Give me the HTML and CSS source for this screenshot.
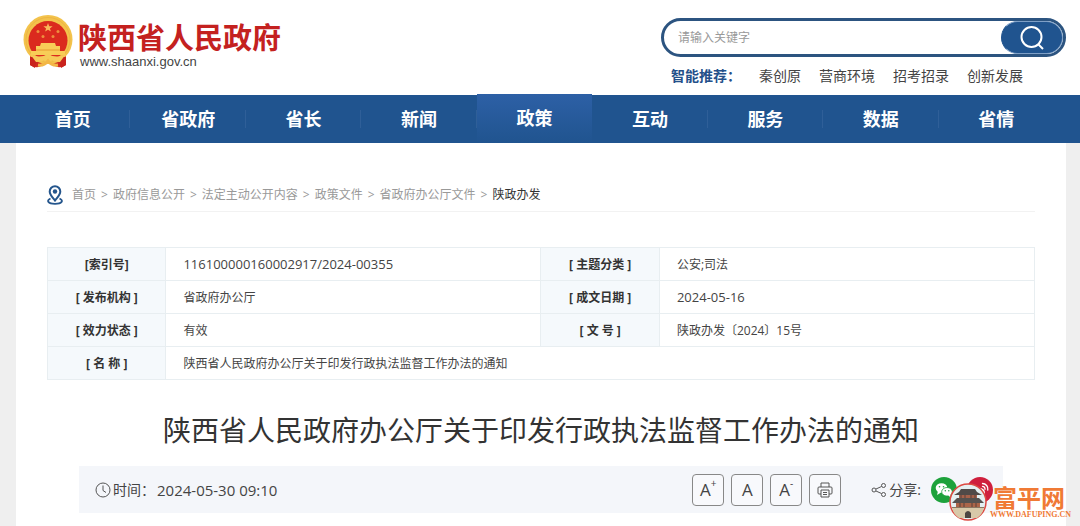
FILE: index.html
```html
<!DOCTYPE html>
<html lang="zh-CN">
<head>
  <meta charset="UTF-8">
  <meta name="viewport" content="width=device-width, initial-scale=1">
  <title>陕西省人民政府办公厅关于印发行政执法监督工作办法的通知</title>
  <link rel="stylesheet" href="styles.css">
</head>
<body>
  <header class="header">
    <a class="logo" href="#">
      <svg class="emblem" viewBox="0 0 50 54" aria-hidden="true">
        <path d="M7 36 L7 50 Q13 54 18 51 L25 47 L32 51 Q37 54 43 50 L43 36 Z" fill="#cf2a20"/>
        <circle cx="25" cy="24.500" r="24.500" fill="#f3c34c"/>
        <circle cx="25" cy="24.500" r="22" fill="none" stroke="#edb443" stroke-width="1"/>
        <circle cx="25" cy="25.500" r="19.500" fill="#db2a1e"/>
        <path d="M25 8 l1.200 3.200 3.400 .1 -2.700 2.100 1 3.200 -2.900 -1.900 -2.900 1.900 1 -3.200 -2.700 -2.100 3.400 -.1 z" fill="#f9b95a"/>
        <g fill="#ee8f3e">
          <circle cx="15" cy="16.500" r="1.500"/><circle cx="35" cy="16.500" r="1.500"/>
          <circle cx="20" cy="21.500" r="1.500"/><circle cx="30" cy="21.500" r="1.500"/>
        </g>
        <path d="M18 28 h14 l1 3 h4 v5 h5 v4 H8 v-4 h5 v-5 h4 z" fill="#f8cd57"/>
        <path d="M13 35 h24" stroke="#e89a33" stroke-width="1"/>
        <path d="M7 42 L14 42 L12 53 L7 50 Z M43 42 L36 42 L38 53 L43 50 Z" fill="#c9231d"/>
        <path d="M7 39 Q16 44 25 39 Q34 44 43 39 L37 47 Q30 47 25 43 Q20 47 13 47 Z" fill="#f7c95a"/>
        <circle cx="25" cy="44" r="4" fill="#f5cb58"/>
        <path d="M15 50 Q21 51 25 46 Q29 51 35 50" fill="none" stroke="#f3b746" stroke-width="3"/>
      </svg>
      <span class="logo-text">
        <strong class="logo-name">陕西省人民政府</strong>
        <span class="logo-url">www.shaanxi.gov.cn</span>
      </span>
    </a>
    <div class="tools">
      <form class="search">
        <input type="text" placeholder="请输入关键字" aria-label="请输入关键字">
        <button type="button" aria-label="搜索">
          <svg viewBox="0 0 24 24" width="24" height="24"><circle cx="11.500" cy="11" r="10"/><path d="M18.500 18.500 L23 23"/></svg>
        </button>
      </form>
      <div class="hot">
        <strong>智能推荐：</strong>
        <a href="#">秦创原</a>
        <a href="#">营商环境</a>
        <a href="#">招考招录</a>
        <a href="#">创新发展</a>
      </div>
    </div>
  </header>

  <nav class="nav">
    <a href="#">首页</a>
    <a href="#">省政府</a>
    <a href="#">省长</a>
    <a href="#">新闻</a>
    <a class="active" href="#">政策</a>
    <a href="#">互动</a>
    <a href="#">服务</a>
    <a href="#">数据</a>
    <a href="#">省情</a>
  </nav>

  <main class="main">
    <div class="crumbs">
      <svg class="pin" viewBox="0 0 16 20" width="16" height="20" aria-hidden="true">
        <path d="M8 15.500 C5 11.800 2.700 9.800 2.700 6.500 A5.300 5.300 0 0 1 13.300 6.500 C13.300 9.800 11 11.800 8 15.500 Z" fill="none" stroke="#24558c" stroke-width="2"/>
        <circle cx="8" cy="6.500" r="2.200" fill="#24558c"/>
        <path d="M3.500 13.500 C-1 15.500 1 18.800 8 18.800 C15 18.800 17 15.500 12.500 13.500" fill="none" stroke="#24558c" stroke-width="1.800"/>
      </svg>
      <a href="#">首页</a><span>&gt;</span>
      <a href="#">政府信息公开</a><span>&gt;</span>
      <a href="#">法定主动公开内容</a><span>&gt;</span>
      <a href="#">政策文件</a><span>&gt;</span>
      <a href="#">省政府办公厅文件</a><span>&gt;</span>
      <a class="current" href="#">陕政办发</a>
    </div>

    <table class="info">
      <tr>
        <th>[索引号]</th>
        <td class="num">116100000160002917/2024-00355</td>
        <th>[ 主题分类 ]</th>
        <td>公安;司法</td>
      </tr>
      <tr>
        <th>[ 发布机构 ]</th>
        <td>省政府办公厅</td>
        <th>[ 成文日期 ]</th>
        <td class="num">2024-05-16</td>
      </tr>
      <tr>
        <th>[ 效力状态 ]</th>
        <td>有效</td>
        <th>[ 文 号 ]</th>
        <td>陕政办发〔2024〕15号</td>
      </tr>
      <tr>
        <th>[ 名 称 ]</th>
        <td colspan="3">陕西省人民政府办公厅关于印发行政执法监督工作办法的通知</td>
      </tr>
    </table>

    <h1>陕西省人民政府办公厅关于印发行政执法监督工作办法的通知</h1>

    <div class="meta">
      <div class="time">
        <svg viewBox="0 0 16 16" width="16" height="16" aria-hidden="true"><circle cx="8" cy="8" r="7"/><path d="M8 3.500 V8.500 L11 10.500"/></svg>
        <span>时间：</span>
        <time>2024-05-30 09:10</time>
      </div>
      <div class="actions">
        <button type="button">A<sup>+</sup></button>
        <button type="button">A</button>
        <button type="button">A<sup>-</sup></button>
        <button type="button" aria-label="打印">
          <svg viewBox="0 0 16 16" width="16" height="16">
            <path d="M4 5 V1 H12 V5 M4 12 H2 Q1 12 1 11 V6 Q1 5 2 5 H14 Q15 5 15 6 V11 Q15 12 14 12 H12"/>
            <path d="M4 8 H12 V15 H4 Z M6 10.500 H10 M6 12.500 H10"/>
          </svg>
        </button>
      </div>
      <div class="share">
        <svg class="share-icon" viewBox="0 0 16 16" width="16" height="16" aria-hidden="true">
          <circle cx="3" cy="8" r="2"/><circle cx="12.500" cy="3.500" r="2"/><circle cx="12.500" cy="12.500" r="2"/>
          <path d="M5 7 L10.500 4.500 M5 9 L10.500 11.500"/>
        </svg>
        <span>分享:</span>
        <a href="#" aria-label="微信">
          <svg viewBox="0 0 26 26" width="26" height="26">
            <circle cx="13" cy="13" r="13" fill="#1da23b"/>
            <ellipse cx="10.500" cy="11" rx="5.800" ry="4.800" fill="#fff"/>
            <path d="M7 14 L6 18 L10 15.500 Z" fill="#fff"/>
            <ellipse cx="16" cy="14.800" rx="5.300" ry="4.300" fill="#fff" stroke="#1da23b" stroke-width=".8"/>
            <path d="M17 18 L19.500 20.500 L19.500 17 Z" fill="#fff"/>
            <g fill="#1da23b"><circle cx="8.500" cy="9.800" r=".8"/><circle cx="12.500" cy="9.800" r=".8"/><circle cx="14.300" cy="13.800" r=".7"/><circle cx="17.800" cy="13.800" r=".7"/></g>
          </svg>
        </a>
        <a href="#" aria-label="微博">
          <svg viewBox="0 0 26 26" width="26" height="26">
            <circle cx="13" cy="13" r="13" fill="#cf1f3d"/>
            <ellipse cx="11.500" cy="15.500" rx="6.500" ry="4.800" fill="#fff"/>
            <ellipse cx="11" cy="15.700" rx="4.500" ry="3.200" fill="#cf1f3d"/>
            <circle cx="10.500" cy="16" r="1.800" fill="#fff"/>
            <path d="M15.500 6.500 A5.500 5.500 0 0 1 20.800 13 M15.500 9.300 A2.700 2.700 0 0 1 18 12.300" fill="none" stroke="#fff" stroke-width="1.300" stroke-linecap="round"/>
          </svg>
        </a>
      </div>
    </div>
  </main>

  <a class="stamp" href="#">
    <svg viewBox="0 0 38 38" width="38" height="38" aria-hidden="true">
      <circle cx="19" cy="19" r="18" fill="#e4f0f2" stroke="#dc4a42" stroke-width="1.500"/>
      <path d="M12 6 L26 6 L28 9 L33 12 L5 12 L10 9 Z" fill="#504a48"/>
      <path d="M10 12 H28 V16 H10 Z" fill="#a5614a"/>
      <path d="M8 15 H30 L35 20 H3 Z" fill="#55514f"/>
      <path d="M7 20 H31 V24 H7 Z" fill="#ab6549"/>
      <path d="M12 12 V15 M16 12 V15 M22 12 V15 M26 12 V15 M11 20 V24 M15 20 V24 M23 20 V24 M27 20 V24" stroke="#56403a" stroke-width="1"/>
      <path d="M3 24 H35 Q34 31 28 35 H10 Q4 31 3 24 Z" fill="#d8c9a9"/>
      <path d="M16 35 V30 Q19 26 22 30 V35 Z" fill="#4d4642"/>
      <path d="M3 24.500 H35" stroke="#8b7762" stroke-width="1"/>
    </svg>
    <span class="stamp-text">
      <strong>富平网</strong>
      <small>WWW.DAFUPING.CN</small>
    </span>
  </a>
</body>
</html>
```
FILE: styles.css
```css
* {
  box-sizing: border-box;
}
body {
  margin: 0;
  min-height: 100vh;
  display: flex;
  flex-direction: column;
  background: #efefef;
  color: #444;
  font-family: "Open Sans", "Noto Sans CJK SC", sans-serif;
  font-size: 12px;
  line-height: 20px;
}
a {
  color: inherit;
  text-decoration: none;
}
button, input {
  font: inherit;
  color: inherit;
  padding: 0;
}
svg {
  display: block;
  flex: none;
}

/* header */
.header {
  display: flex;
  justify-content: space-between;
  align-items: flex-start;
  height: 95px;
  padding: 15px 14px 0 23px;
  background: #fff;
}
.logo {
  display: flex;
  gap: 5px;
}
.emblem {
  width: 50px;
  height: 54px;
}
.logo-text {
  display: flex;
  flex-direction: column;
  padding-top: 6px;
}
.logo-name {
  color: #c4211f;
  font-size: 29px;
  font-weight: 700;
  line-height: 33px;
}
.logo-url {
  padding-left: 2px;
  color: #444;
  font-family: "Liberation Sans", sans-serif;
  font-size: 13px;
  line-height: 15px;
}
.tools {
  width: 405px;
  padding-top: 3px;
}
.search {
  display: flex;
  height: 39px;
  border: 3px solid #2c5480;
  border-radius: 20px;
  overflow: hidden;
}
.search input {
  flex: 1;
  min-width: 0;
  padding-left: 14px;
  border: 0;
  outline: 0;
  background: transparent;
}
.search input::placeholder {
  color: #999;
}
.search button {
  display: flex;
  align-items: center;
  justify-content: center;
  width: 62px;
  border: 1px solid #7e9fc6;
  border-left-color: #20548f;
  border-radius: 17px;
  background: #20548f;
}
.search svg {
  fill: none;
  stroke: #fff;
  stroke-width: 2;
}
.hot {
  display: flex;
  gap: 18px;
  padding: 9px 0 0 10px;
  font-size: 14px;
}
.hot strong {
  color: #24508a;
}

/* nav */
.nav {
  display: grid;
  grid-template-columns: repeat(9, 1fr);
  height: 48px;
  padding: 0 26px 0 15px;
  background: #20548f;
  color: #fff;
  font-size: 18px;
  font-weight: 700;
  line-height: 48px;
  text-align: center;
}
.nav a {
  background: linear-gradient(#2f5f98, #2f5f98) right 15px / 1px 18px no-repeat;
}
.nav a:last-child {
  background: none;
}
.nav .active {
  margin-top: -1px;
  background: linear-gradient(#2d60a6, #20548f);
}

/* content */
.main {
  flex: 1;
  margin: 0 14px 0 16px;
  padding: 42px 31px 12px;
  background: #fff;
}
.crumbs {
  display: flex;
  align-items: center;
  gap: 5px;
  padding-bottom: 6px;
  border-bottom: 1px solid #f2f2f2;
  color: #999;
}
.pin {
  margin-right: 4px;
}
.crumbs .current {
  color: #333;
}
.info {
  width: 100%;
  margin-top: 35px;
  border-collapse: collapse;
  table-layout: fixed;
}
.info th, .info td {
  height: 33px;
  padding: 1px 0 0;
  border: 1px solid #e8eef1;
}
.info th {
  width: 12%;
  background: #f5f9fc;
  color: #333;
}
.info td {
  width: 38%;
  padding-left: 17px;
}
.info .num {
  padding-top: 0;
  font-size: 13px;
}
h1 {
  margin: 29px 0 15px;
  color: #333;
  font-size: 28px;
  font-weight: 400;
  line-height: 42px;
  text-align: center;
}
.meta {
  display: flex;
  align-items: center;
  height: 47px;
  margin: 0 32px;
  padding: 0 10px 0 16px;
  background: #f4f6fa;
  font-size: 14px;
}
.meta svg {
  fill: none;
  stroke: #555;
}
.time {
  display: flex;
  align-items: center;
  gap: 2px;
  margin-right: auto;
}
.time time {
  font-size: 15px;
}
.actions {
  display: flex;
  gap: 7px;
}
.actions button {
  display: flex;
  align-items: center;
  justify-content: center;
  width: 32px;
  height: 32px;
  border: 1px solid #888;
  border-radius: 4px;
  background: #f8f9fc;
  font-size: 17px;
}
.actions sup {
  align-self: flex-start;
  font-size: 10px;
  line-height: 16px;
}
.share {
  display: flex;
  align-items: center;
  gap: 10px;
  margin-left: 30px;
}
.share-icon {
  margin-right: -8px;
}
.share a svg {
  stroke: none;
}

/* site badge over the page corner */
.stamp {
  position: absolute;
  right: 9px;
  bottom: 5px;
  display: flex;
  gap: 3px;
  color: #f07a35;
}
.stamp-text {
  display: flex;
  flex-direction: column;
  padding-top: 2px;
}
.stamp strong {
  padding-left: 3px;
  font-size: 24px;
  line-height: 25px;
}
.stamp small {
  font-family: "Liberation Serif", serif;
  font-size: 8px;
  font-weight: 700;
  line-height: 9px;
}
```
